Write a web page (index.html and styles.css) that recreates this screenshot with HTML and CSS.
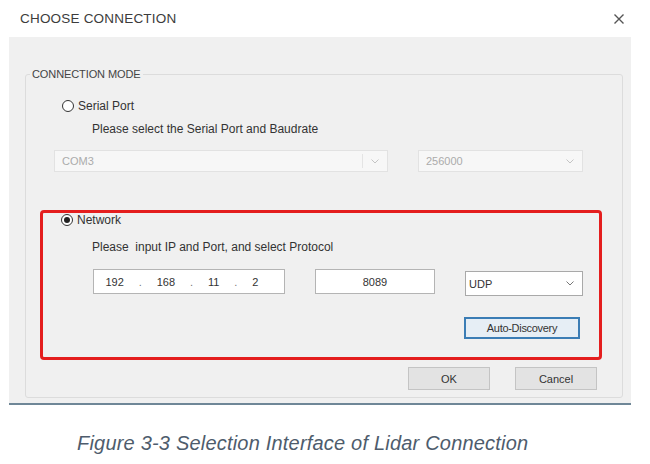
FILE: index.html
```html
<!DOCTYPE html>
<html>
<head>
<meta charset="utf-8">
<link rel="stylesheet" href="styles.css">
</head>
<body>
<div class="titlebar">
  <span class="title">CHOOSE CONNECTION</span>
  <svg class="close" width="12" height="12" viewBox="0 0 12 12"><path d="M1.5 1.5L10.5 10.5M10.5 1.5L1.5 10.5" stroke="#555" stroke-width="1.4"/></svg>
</div>
<div class="dialog">
  <fieldset class="group">
    <legend>CONNECTION MODE</legend>
    <div class="radio-row serial">
      <span class="radio"></span><span class="lbl">Serial Port</span>
    </div>
    <div class="hint hint-serial">Please select the Serial Port and Baudrate</div>
    <div class="combo-row">
      <div class="combo disabled com"><span>COM3</span><span class="sep"></span><svg class="chev" width="8" height="5" viewBox="0 0 8 5"><path d="M0.5 0.5L4 4L7.5 0.5" fill="none" stroke="#c4c4c4"/></svg></div>
      <div class="combo disabled baud"><span>256000</span><svg class="chev" width="8" height="5" viewBox="0 0 8 5"><path d="M0.5 0.5L4 4L7.5 0.5" fill="none" stroke="#c4c4c4"/></svg></div>
    </div>
    <div class="netbox">
      <div class="radio-row network">
        <span class="radio checked"></span><span class="lbl">Network</span>
      </div>
      <div class="hint hint-net">Please&nbsp; input IP and Port, and select Protocol</div>
      <div class="input-row">
        <div class="ipbox"><span>192</span><span class="dot">.</span><span>168</span><span class="dot">.</span><span>11</span><span class="dot">.</span><span>2</span></div>
        <div class="portbox">8089</div>
        <div class="combo udp"><span>UDP</span><svg class="chev" width="8" height="5" viewBox="0 0 8 5"><path d="M0.5 0.5L4 4L7.5 0.5" fill="none" stroke="#777"/></svg></div>
      </div>
      <div class="auto-row"><div class="btn auto">Auto-Discovery</div></div>
    </div>
    <div class="btn-row">
      <div class="btn">OK</div>
      <div class="btn">Cancel</div>
    </div>
  </fieldset>
</div>
<div class="caption">Figure 3-3 Selection Interface of Lidar Connection</div>
</body>
</html>
```
FILE: styles.css
```css
html, body {
  margin: 0;
  padding: 0;
}
body {
  width: 650px;
  height: 464px;
  background: #ffffff;
  font-family: "Liberation Sans", Arial, sans-serif;
  color: #333;
  overflow: hidden;
}
.titlebar {
  height: 37px;
  display: flex;
  align-items: center;
  justify-content: space-between;
  padding: 0 25px 0 20px;
}
.title {
  font-size: 13.5px;
  color: #3c3c3c;
  letter-spacing: 0.2px;
}
.close {
  display: block;
}
.dialog {
  margin-left: 9px;
  width: 622px;
  height: 368px;
  box-sizing: border-box;
  background: #f0f0f0;
  border-bottom: 2px solid #6f8797;
  padding-top: 31px;
}
.group {
  margin: 0 0 0 16px;
  padding: 0;
  width: 598px;
  height: 330px;
  box-sizing: border-box;
  border: 1px solid #dcdcdc;
  border-radius: 3px;
}
.group legend {
  font-size: 11px;
  line-height: 13px;
  padding: 0 2px;
  margin-left: 4px;
  color: #444;
  letter-spacing: -0.1px;
}
.radio-row {
  display: flex;
  align-items: center;
  height: 14px;
  font-size: 12px;
}
.radio {
  width: 10px;
  height: 10px;
  border: 1px solid #333;
  border-radius: 50%;
  background: #fff;
  margin-right: 4px;
  display: flex;
  align-items: center;
  justify-content: center;
}
.radio.checked::after {
  content: "";
  width: 6px;
  height: 6px;
  border-radius: 50%;
  background: #222;
}
.serial {
  margin-top: 18px;
  padding-left: 36px;
}
.hint {
  font-size: 12px;
  line-height: 14px;
  color: #333;
}
.hint-serial {
  margin-top: 9px;
  padding-left: 66px;
}
.combo-row {
  display: flex;
  gap: 30px;
  margin-top: 14px;
  padding-left: 28px;
}
.combo {
  height: 22px;
  box-sizing: border-box;
  display: flex;
  align-items: center;
  font-size: 11px;
  padding: 0 8px 0 7px;
  border: 1px solid #adadad;
  background: #fff;
}
.combo span:first-child {
  flex: 1;
}
.combo.disabled {
  background: #f7f7f7;
  border-color: #e2e2e2;
  color: #ababab;
}
.com {
  width: 334px;
}
.com .sep {
  width: 1px;
  height: 14px;
  background: #e4e4e4;
  margin-right: 8px;
  flex: none;
}
.baud {
  width: 165px;
}
.netbox {
  margin: 38px 0 0 14px;
  width: 562px;
  height: 150px;
  box-sizing: border-box;
  border: 3px solid #e41e1e;
  border-radius: 4px;
}
.network {
  height: 12px;
  margin-top: 1px;
  padding-left: 18px;
}
.hint-net {
  margin-top: 14px;
  padding-left: 49px;
}
.input-row {
  display: flex;
  align-items: flex-start;
  gap: 30px;
  margin-top: 15px;
  padding-left: 50px;
}
.ipbox {
  width: 192px;
  height: 25px;
  box-sizing: border-box;
  border: 1px solid #b4b4b4;
  background: #fff;
  display: flex;
  align-items: center;
  justify-content: space-around;
  padding: 0 18px 0 4px;
  font-size: 11px;
}
.ipbox .dot {
  color: #777;
}
.portbox {
  width: 120px;
  height: 25px;
  box-sizing: border-box;
  border: 1px solid #b4b4b4;
  background: #fff;
  display: flex;
  align-items: center;
  justify-content: center;
  font-size: 11px;
}
.udp {
  width: 118px;
  height: 25px;
  margin-top: 2px;
  padding: 0 8px 0 3px;
  border-color: #a9a9a9;
}
.auto-row {
  display: flex;
  justify-content: flex-end;
  margin-top: 21px;
  padding-right: 19px;
}
.btn {
  width: 82px;
  height: 23px;
  box-sizing: border-box;
  border: 1px solid #c4c4c4;
  background: #e3e3e3;
  display: flex;
  align-items: center;
  justify-content: center;
  font-size: 11px;
  color: #333;
}
.btn.auto {
  width: 116px;
  height: 22px;
  border: 2px solid #3b7db5;
  background: #e6eef5;
  letter-spacing: -0.3px;
}
.btn-row {
  display: flex;
  justify-content: flex-end;
  gap: 25px;
  margin-top: 7px;
  padding-right: 25px;
}
.caption {
  margin-top: 25px;
  padding-left: 77px;
  font-size: 20px;
  line-height: 26px;
  font-style: italic;
  color: #4e5c6c;
  letter-spacing: 0.2px;
}
```
